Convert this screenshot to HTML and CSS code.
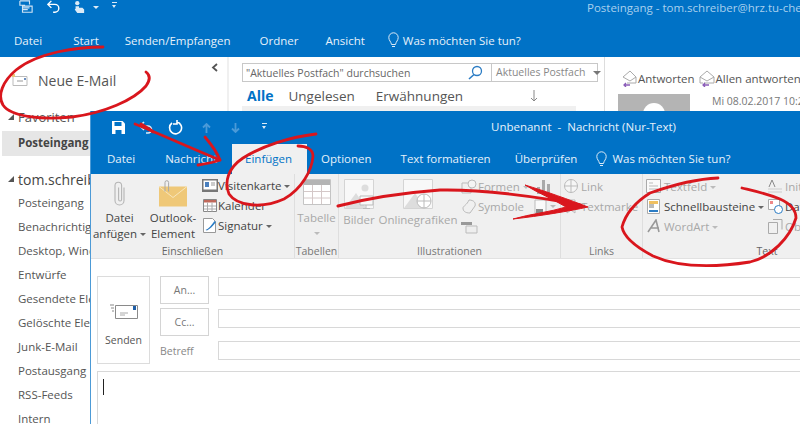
FILE: index.html
```html
<!DOCTYPE html>
<html lang="de">
<head>
<meta charset="utf-8">
<title>Outlook</title>
<link rel="stylesheet" href="styles.css">
</head>
<body>
<div class="win back">
  <header class="bhead">
    <div class="btitle">
      <div class="qat">
        <svg class="ic" width="16" height="14" viewBox="0 0 18 16"><path d="M2 1h11v4M2 1v5h6M5 7h11v7H5zM5 9h8M5 11h6" fill="none" stroke="#cfe4f5" stroke-width="1.3"/></svg>
        <svg class="ic" width="14" height="14" viewBox="0 0 16 16"><path d="M5 1 1 5l4 4M1 5h8a4.500 4.500 0 0 1 0 9H7" fill="none" stroke="#fff" stroke-width="1.6"/></svg>
        <svg class="ic" width="12" height="14" viewBox="0 0 14 16"><circle cx="5" cy="3.500" r="2.500" fill="#dcebf7"/><path d="M3 7h4v2h4l2 2v4H5L2 11l1-1z" fill="#dcebf7"/></svg>
        <span class="caret w"></span>
        <span class="qmenu"></span>
      </div>
      <span class="acct">Posteingang - tom.schreiber@hrz.tu-chemnitz.de</span>
    </div>
    <nav class="btabs">
      <span class="t1">Datei</span><span class="t2">Start</span><span class="t3">Senden/Empfangen</span><span class="t4">Ordner</span><span class="t5">Ansicht</span>
      <svg class="bulb" width="11" height="17" viewBox="0 0 11 17"><path d="M3.500 12.500C3 9.500.8 8.500.8 5.500a4.700 4.700 0 0 1 9.400 0c0 3-2.200 4-2.700 7zM4 14.500h3" fill="none" stroke="#dcebf7"/></svg>
      <span class="ask">Was möchten Sie tun?</span>
    </nav>
  </header>
  <main class="bmain">
    <aside class="side">
      <div class="newmail">
        <svg width="16" height="12" viewBox="0 0 16 12"><path d="M1 2.500h14v9H1z" fill="#fff" stroke="#bbb"/><path d="M5 7h6" stroke="#999"/><path d="M0 0h3v3H0z" fill="#e9c67a"/><path d="M12 4h2v2h-2z" fill="#6d8fc0"/></svg>
        <span>Neue E-Mail</span>
      </div>
      <div class="fav"><span class="tri"></span>Favoriten</div>
      <div class="favitem">Posteingang</div>
      <div class="acc"><span class="tri"></span>tom.schreiber</div>
      <ul class="folders">
        <li>Posteingang</li><li>Benachrichtigungen</li><li>Desktop, Windows</li><li>Entwürfe</li><li>Gesendete Elemente</li><li>Gelöschte Elemente</li><li>Junk-E-Mail</li><li>Postausgang</li><li>RSS-Feeds</li><li>Intern</li>
      </ul>
      <svg class="collapse" width="7" height="9" viewBox="0 0 7 9"><path d="M6 1 2 4.500 6 8" fill="none" stroke="#555" stroke-width="1.800"/></svg>
    </aside>
    <section class="list">
      <div class="search">
        <span class="q">"Aktuelles Postfach" durchsuchen</span>
        <svg class="lens" width="16" height="15" viewBox="0 0 16 15"><circle cx="10" cy="6" r="4.500" fill="none" stroke="#2b7cc4" stroke-width="1.300"/><path d="M7 9.500 2 14" stroke="#2b7cc4" stroke-width="1.600"/></svg>
        <span class="scope">Aktuelles Postfach<i class="caret g"></i></span>
      </div>
      <div class="filters">
        <b>Alle</b><span class="f2">Ungelesen</span><span class="f3">Erwähnungen</span>
        <svg class="down" width="8" height="12" viewBox="0 0 8 12"><path d="M4 0v11M1 8l3 3 3-3" fill="none" stroke="#888"/></svg>
      </div>
      <div class="band"></div>
    </section>
    <section class="read">
      <div class="actions">
        <svg width="17" height="17" viewBox="0 0 17 17"><path d="M2 7 9 1l6 6v6H6" fill="none" stroke="#aaa"/><path d="M2 7l7 4 6-4" fill="none" stroke="#aaa"/><path d="M3 15h6M5 13l-2 2 2 2" fill="none" stroke="#8a5cb8" stroke-width="1.300"/></svg>
        <span>Antworten</span>
        <svg class="a2" width="18" height="17" viewBox="0 0 18 17"><path d="M2 7 9 1l7 6v6H6" fill="none" stroke="#aaa"/><path d="M2 7v6h3M2 7l7 4 7-4" fill="none" stroke="#aaa"/><path d="M5 15h6M7 13l-2 2 2 2" fill="none" stroke="#8a5cb8" stroke-width="1.300"/></svg>
        <span>Allen antworten</span>
      </div>
      <div class="sender">
        <div class="avatar"><span></span></div>
        <time>Mi 08.02.2017 10:29</time>
      </div>
    </section>
  </main>
</div>

<div class="win front">
  <header class="fhead">
    <div class="ftitle">
      <div class="fqat">
        <svg width="15" height="15" viewBox="0 0 15 15"><path d="M1 1h10.500L14 3.500V14H1z" fill="#fff"/><path d="M3.500 2h7v4h-7zM4.500 10h6v4h-6z" fill="#0072c6"/></svg>
        <svg width="15" height="13" viewBox="0 0 15 13"><path d="M5 1 1 5l4 4M1 5h8a3.500 3.500 0 0 1 0 7H7" fill="none" stroke="#dcebf7" stroke-width="1.600"/></svg>
        <svg width="15" height="15" viewBox="0 0 15 15"><path d="M4 3a6 6 0 1 0 5-1M9 0v4H5" fill="none" stroke="#fff" stroke-width="1.600"/></svg>
        <svg class="dim" width="9" height="10" viewBox="0 0 9 10"><path d="M4.500 10V1M1 4.500 4.500 1 8 4.500" fill="none" stroke="#4a9ad8" stroke-width="1.800"/></svg>
        <svg class="dim" width="9" height="10" viewBox="0 0 9 10"><path d="M4.500 0v9M1 5.500 4.500 9 8 5.500" fill="none" stroke="#4a9ad8" stroke-width="1.800"/></svg>
        <span class="qmenu"></span>
      </div>
      <span class="ftext">Unbenannt &nbsp;-&nbsp; Nachricht (Nur-Text)</span>
    </div>
    <nav class="ftabs">
      <span class="ft1">Datei</span><span class="ft2">Nachricht</span><span class="ft3">Einfügen</span><span class="ft4">Optionen</span><span class="ft5">Text formatieren</span><span class="ft6">Überprüfen</span>
      <svg class="bulb2" width="11" height="17" viewBox="0 0 11 17"><path d="M3.500 12.500C3 9.500.8 8.500.8 5.500a4.700 4.700 0 0 1 9.400 0c0 3-2.200 4-2.700 7zM4 14.500h3" fill="none" stroke="#dcebf7"/></svg>
      <span class="ask">Was möchten Sie tun?</span>
    </nav>
  </header>

  <div class="ribbon">
    <section class="grp g1">
      <div class="gbody">
        <div class="big b1">
          <svg width="14" height="28" viewBox="0 0 14 28"><path d="M11 8v13a4.500 4.500 0 0 1-9 0V6a3.300 3.300 0 0 1 6.600 0v14a1.500 1.500 0 0 1-3 0V8" fill="none" stroke="#b5b5b5" stroke-width="1.100"/></svg>
          <span>Datei<br>anfügen <i class="caret"></i></span>
        </div>
        <div class="big b2">
          <svg width="30" height="28" viewBox="0 0 30 28"><path d="M1 7h28v20H1z" fill="#efc878"/><path d="M1 7l14 11L29 7" fill="none" stroke="#f8e6bd"/><path d="M7 12V3a1.800 1.800 0 0 1 3.600 0v9" fill="none" stroke="#a8a8a8"/></svg>
          <span>Outlook-<br>Element</span>
        </div>
        <div class="small s1">
          <div class="srow"><svg width="16" height="13" viewBox="0 0 16 13"><path d="M0 0h16v13H0z" fill="#777"/><path d="M1.500 1.500h13v9h-13z" fill="#fff"/><path d="M3 3h4v5H3z" fill="#4a7fbe"/><path d="M9 4h4M9 6h4" stroke="#999"/></svg><span>Visitenkarte <i class="caret"></i></span></div>
          <div class="srow"><svg width="16" height="13" viewBox="0 0 14 13"><path d="M.500.500h13v12H.500z" fill="#fff" stroke="#888"/><path d="M1 1h12v2.500H1z" fill="#c0685a"/><path d="M4.500 3.500v9M9 3.500v9M1 7h12M1 10h12" stroke="#aaa"/></svg><span>Kalender</span></div>
          <div class="srow"><svg width="16" height="15" viewBox="0 0 15 15"><path d="M1 .500h9l3 3V14.500H1z" fill="#fff" stroke="#999"/><path d="M3 12c3-1 6-5 9-9l1.500 1c-3 4-6 7-9 8.500z" fill="#2b7cc4"/></svg><span>Signatur <i class="caret"></i></span></div>
        </div>
      </div>
      <label>Einschließen</label>
    </section>
    <section class="grp g2 off">
      <div class="gbody col">
        <svg width="28" height="26" viewBox="0 0 28 26"><path d="M.500.500h27v25H.500z" fill="#fff" stroke="#c4c4c4"/><path d="M1 1h26v5H1z" fill="#b4b4b4"/><path d="M9.500 6v19M18.500 6v19M1 12.500h26M1 19h26" stroke="#d4c8c8"/></svg>
        <span class="tb">Tabelle</span>
        <i class="caret"></i>
      </div>
      <label>Tabellen</label>
    </section>
    <section class="grp g3 off">
      <div class="gbody">
        <div class="ill">
          <svg class="pic1" width="30" height="30" viewBox="0 0 30 30"><path d="M.500.500h29v29H.500z" fill="#f8f8f8" stroke="#d4d4d4"/><path d="M1 29 12 14l10 15z" fill="#ddd"/><circle cx="21" cy="9" r="3.500" fill="#ddd"/><path d="M16 17h13v9H16zM22 26v3M19 29.500h7" fill="#f8f8f8" stroke="#bbb"/></svg>
          <span>Bilder</span>
        </div>
        <div class="ill i2">
          <svg class="pic2" width="30" height="30" viewBox="0 0 30 30"><path d="M.500.500h29v29H.500z" fill="#f8f8f8" stroke="#d4d4d4"/><path d="M1 29 12 14l10 15z" fill="#ddd"/><circle cx="21" cy="22" r="7" fill="#fff" stroke="#bbb"/><path d="M14 22h14M21 15v14" stroke="#bbb"/></svg>
          <span>Onlinegrafiken</span>
        </div>
        <div class="small s3">
          <div class="srow"><svg width="17" height="15" viewBox="0 0 17 15"><path d="M1 4h9v10H1z" fill="none" stroke="#bbb"/><circle cx="11" cy="5" r="4" fill="#f4f4f4" stroke="#bbb"/></svg><span>Formen <i class="caret"></i></span><svg class="mini" width="13" height="15" viewBox="0 0 13 15"><path d="M0 8h3v7H0zM5 1h3v14H5zM10 5h3v10h-3z" fill="#aaa"/></svg></div>
          <div class="srow"><svg width="17" height="15" viewBox="0 0 17 15"><path d="M8 1c5 0 7 3 6 6l-5 7c-5 0-7-2-7-5 0-2 4-3 6-8z" fill="none" stroke="#bbb"/></svg><span>Symbole</span><svg class="mini m2" width="13" height="15" viewBox="0 0 13 15"><path d="M1 1h11v13H1z" fill="#fafafa" stroke="#bbb"/><path d="M2 10h7v4H2z" fill="#888"/></svg><i class="caret"></i></div>
          <div class="srow"><svg class="sa" width="17" height="13" viewBox="0 0 17 13"><path d="M0 1h11v3H0z" fill="#999"/><path d="M5 5h11v7H5z" fill="#eee" stroke="#bbb"/></svg></div>
        </div>
      </div>
      <label>Illustrationen</label>
    </section>
    <section class="grp g4 off">
      <div class="gbody">
        <div class="small s4">
          <div class="srow"><svg width="15" height="15" viewBox="0 0 15 15"><circle cx="7" cy="7" r="6.500" fill="#f6f6f6" stroke="#bbb"/><path d="M0 7h14M7 0v14" stroke="#bbb"/></svg><span>Link</span></div>
          <div class="srow"><svg width="15" height="15" viewBox="0 0 15 15"><path d="M3 1h8v13l-4-3-4 3z" fill="#f6f6f6" stroke="#bbb"/></svg><span>Textmarke</span></div>
        </div>
      </div>
      <label>Links</label>
    </section>
    <section class="grp g5">
      <div class="gbody">
        <div class="small s5">
          <div class="srow off"><svg width="15" height="14" viewBox="0 0 15 14"><path d="M.500.500h14v13H.500z" fill="#fafafa" stroke="#aaa"/><path d="M3 4h4M3 7h9M3 10h9" stroke="#bbb"/></svg><span>Textfeld <i class="caret"></i></span></div>
          <div class="srow"><svg width="15" height="15" viewBox="0 0 13 15"><path d="M.500.500h12v14H.500z" fill="#fff" stroke="#aaa"/><path d="M2 2h9v3H2z" fill="#f0c060"/><path d="M2 6h5M2 8h5" stroke="#777"/><path d="M2 11h9v2H2z" fill="#2b7cc4"/></svg><span class="strong">Schnellbausteine <i class="caret"></i></span></div>
          <div class="srow off"><svg width="15" height="15" viewBox="0 0 13 15"><path d="M1 13 9 1l3 12M4 9h8" fill="none" stroke="#999" stroke-width="1.600"/></svg><span>WordArt <i class="caret"></i></span></div>
        </div>
        <div class="small s6">
          <div class="srow off"><svg width="15" height="15" viewBox="0 0 15 15"><path d="M0 13h14M0 10h14" stroke="#ccc"/><path d="M1 8l3-7 3 7" fill="none" stroke="#888"/></svg><span>Initiale</span></div>
          <div class="srow"><svg width="15" height="15" viewBox="0 0 15 15"><path d="M.500.500h11v10H.500z" fill="#fff" stroke="#aaa"/><path d="M2 2h3v3H2z" fill="#e88"/><circle cx="10.500" cy="10.500" r="4" fill="#fff" stroke="#2b7cc4"/></svg><span class="strong">Datum</span></div>
          <div class="srow off"><svg width="15" height="15" viewBox="0 0 15 15"><path d="M.500 3.500h9v11h-9zM5 .500h9v10" fill="none" stroke="#aaa"/></svg><span>Objekt</span></div>
        </div>
      </div>
      <label>Text</label>
    </section>
  </div>

  <div class="compose">
    <button class="send">
      <svg width="28" height="15" viewBox="0 0 28 15"><path d="M5.500 1.500h22v13h-22z" fill="#fff" stroke="#8a8a8a"/><path d="M10 9h8M10 11h5" stroke="#aaa"/><path d="M23 2h3v4h-3z" fill="#1f5fa8"/><path d="M0 1h4M1 4h3M2 7h2" stroke="#888"/></svg>
      <span>Senden</span>
    </button>
    <div class="fields">
      <div class="frow"><button class="addr">An...</button><div class="inp"></div></div>
      <div class="frow"><button class="addr">Cc...</button><div class="inp"></div></div>
      <div class="frow sub"><span class="blabel">Betreff</span><div class="inp"></div></div>
    </div>
  </div>
  <div class="body"><span class="cursor"></span></div>
</div>

<svg class="ink" width="800" height="424" viewBox="0 0 800 424" fill="none">
  <path class="pen" d="M103 47C78 47 38 52 16 70C3 81-3 95 3 105C11 117 42 120 72 117C104 113 134 100 146 86C151 79 150 75 146 72"/>
  <path class="pen" d="M135 124C160 134 195 150 220 160"/>
  <path class="pen" d="M141 124C146 127 150 129 153 132M205 137C210 143 217 152 220 160C212 163 204 164 198 165"/>
  <path class="pen" d="M316 134C290 137 262 146 243 158C228 168 224 182 229 194C237 206 262 209 284 199C302 189 312 170 313 156C313 149 306 146 298 146"/>
  <path class="pen thin" d="M338 206C365 199 400 193 440 190C480 189 540 197 580 205"/>
  <path class="fillink" d="M525 185C545 191 570 200 588 207C570 211 540 216 513 219C530 214 550 212 566 207C553 199 538 193 525 185Z"/>
  <path class="pen" d="M718 178C693 179 667 187 650 193C634 203 625 216 622 227C624 238 636 247 653 256C675 266 705 269 750 262C771 257 790 238 796 218C796 210 791 204 780 199C765 193 750 190 742 188"/>
</svg>
</body>
</html>
```
FILE: styles.css
```css
* { box-sizing: border-box; }
html, body { margin: 0; padding: 0; }
body {
  width: 800px; height: 424px; overflow: hidden; position: relative;
  font-family: "Open Sans", "Noto Sans", sans-serif; font-size: 11.500px; color: #444; background: #fff;
}
svg { flex: none; display: block; }
ul { list-style: none; margin: 0; padding: 0; }
label { display: block; }
i { font-style: normal; }
button { font: inherit; color: inherit; background: #fff; padding: 0; }

.win { position: absolute; overflow: hidden; }
.back { left: 0; top: 0; width: 800px; height: 424px; background: #fff; }
.front { left: 90px; top: 111px; width: 710px; height: 313px; background: #fff; border-left: 1px solid #4c9ad6; display: flex; flex-direction: column; }

.caret { display: inline-block; width: 0; height: 0; border: 3px solid transparent; border-top: 3px solid #666; border-bottom: 0; vertical-align: middle; }
.caret.w { border-top-color: #dcebf7; }
.caret.g { border-top-color: #777; border-width: 4px 4px 0; margin-left: 8px; }
.qmenu { display: inline-block; width: 5px; height: 6px; border-top: 1px solid #dcebf7; position: relative; }
.qmenu::after { content: ""; position: absolute; left: 0; top: 2px; border: 2.500px solid transparent; border-top: 3px solid #dcebf7; border-bottom: 0; }

/* back window */
.bhead { height: 57px; background: #0072c6; color: #dcebf7; }
.btitle { height: 30px; display: flex; align-items: flex-start; }
.qat { display: flex; align-items: center; height: 14px; padding-left: 18px; }
.qat .ic:nth-child(2) { margin-left: 13px; }
.qat .ic:nth-child(3) { margin-left: 12px; }
.qat .caret { margin-left: 8px; }
.qat .qmenu { margin-left: 13px; margin-top: -4px; }
.acct { position: absolute; left: 587px; top: 0; line-height: 16px; color: #a9d0ee; white-space: nowrap; }
.btabs { display: flex; align-items: center; height: 20px; position: relative; color: #e6f1fa; }
.btabs > span { white-space: nowrap; }
.t1 { margin-left: 14px; }
.t2 { margin-left: 31px; }
.t3 { margin-left: 26px; }
.t4 { margin-left: 29px; }
.t5 { margin-left: 27px; }
.bulb { margin-left: 23px; }
.ask { margin-left: 4px; }

.bmain { display: flex; height: 367px; }
.side { flex: none; width: 229px; position: relative; background: #fff; border-right: 2px solid #f0f0f0; padding-left: 2px; overflow: hidden; }
.newmail { display: flex; align-items: center; height: 46px; padding-left: 10px; font-size: 14px; color: #555; gap: 10px; }
.fav, .acc { display: flex; align-items: center; padding-left: 6px; white-space: nowrap; }
.fav { height: 28px; font-size: 13px; color: #555; }
.tri { width: 0; height: 0; border-left: 6px solid transparent; border-bottom: 6px solid #555; margin-right: 4px; }
.favitem { height: 25px; background: #e6e6e6; font-weight: 700; line-height: 24px; padding-left: 16px; }
.acc { height: 24px; margin-top: 11px; font-size: 14px; }
.folders li { height: 24px; line-height: 24px; padding-left: 16px; color: #555; white-space: nowrap; }
.collapse { position: absolute; right: 9px; top: 6px; }

.list { flex: none; width: 376px; border-right: 1px solid #ddd; padding: 6px 8px 0 13px; }
.search { display: flex; align-items: center; height: 19px; border: 1px solid #c8c8c8; width: 356px; }
.q { color: #666; font-size: 10.500px; padding-left: 3px; width: 225px; white-space: nowrap; flex: none; }
.lens { margin-left: -1px; }
.scope { margin-left: 8px; padding-left: 4px; height: 100%; line-height: 17px; border-left: 1px solid #c8c8c8; color: #888; font-size: 10.500px; white-space: nowrap; flex: 1; }
.filters { display: flex; align-items: center; height: 27px; font-size: 13.500px; padding-left: 5px; color: #555; white-space: nowrap; }
.filters b { color: #0072c6; font-size: 14px; }
.f2 { margin-left: 15px; }
.f3 { margin-left: 21px; }
.down { margin-left: 67px; }
.band { height: 6px; background: #f0f0f0; width: 334px; margin-top: -3px; }

.read { flex: 1; min-width: 0; overflow: hidden; padding: 12px 0 0 16px; }
.actions { display: flex; align-items: center; height: 18px; font-size: 11.500px; color: #555; white-space: nowrap; }
.a2 { margin-left: 3px; }
.sender { display: flex; margin: 7px 0 0 -3px; }
.avatar { flex: none; width: 72px; height: 40px; background: #b4b4b4; overflow: hidden; }
.avatar span { display: block; width: 22px; height: 22px; border-radius: 50%; background: #fff; margin: 9px auto 0; }
.sender time { margin-left: 22px; font-size: 10.500px; color: #777; white-space: nowrap; }

/* front window */
.fhead { height: 63px; background: #0072c6; color: #e6f1fa; flex: none; }
.ftitle { height: 33px; display: flex; align-items: center; position: relative; }
.fqat { display: flex; align-items: center; padding-left: 20px; }
.fqat svg:nth-child(2) { margin-left: 13px; }
.fqat svg:nth-child(3) { margin-left: 14px; }
.fqat svg:nth-child(4) { margin-left: 19px; }
.fqat svg:nth-child(5) { margin-left: 20px; }
.fqat .qmenu { margin-left: 22px; margin-top: -3px; }
.ftext { position: absolute; left: 400px; top: 8px; white-space: nowrap; }
.ftabs { display: flex; align-items: stretch; height: 30px; white-space: nowrap; }
.ftabs span { line-height: 30px; }
.ft1 { margin-left: 16px; }
.ft2 { margin-left: 30px; }
.ft3 { margin-left: 15px; width: 75px; padding-left: 13px; background: #f0f0f0; color: #0072c6; }
.ft4 { margin-left: 14px; }
.ft5 { margin-left: 29px; }
.ft6 { margin-left: 24px; }
.bulb2 { margin: 7px 0 0 19px; }
.ftabs .ask { margin-left: 5px; }

.ribbon { display: flex; height: 85px; background: #f0f0f0; border-bottom: 1px solid #e2e2e2; flex: none; }
.grp { display: flex; flex-direction: column; border-right: 1px solid #dedede; height: 84px; flex: none; }
.grp label { height: 14px; line-height: 14px; font-size: 10.500px; text-align: center; color: #666; }
.gbody { display: flex; flex: 1; min-height: 0; }
.g1 { width: 204px; }
.g2 { width: 44px; }
.g3 { width: 222px; }
.g4 { width: 82px; }
.g5 { width: 248px; border-right: 0; }
.off { color: #a8a8a8; }
.off label { color: #777; }

.big { display: flex; flex-direction: column; align-items: center; text-align: center; line-height: 16px; padding-top: 5px; flex: none; }
.big span { margin-top: 2px; white-space: nowrap; }
.big svg { height: 29px; }
.b1 { width: 55px; margin-left: 1px; }
.b2 { width: 52px; }
.small { display: flex; flex-direction: column; padding-top: 2px; flex: none; }
.srow { display: flex; align-items: center; height: 20px; gap: 2px; white-space: nowrap; }
.s1 { margin-left: 3px; padding-top: 1px; }
.s1 .srow { gap: 0; }
.strong { color: #444; }

.col { flex-direction: column; align-items: center; padding-top: 5px; }
.col .tb { margin-top: 5px; line-height: 16px; }
.col .caret { margin-top: 6px; border-top-color: #bbb; }
.ill { display: flex; flex-direction: column; align-items: center; padding-top: 5px; line-height: 16px; width: 40px; flex: none; }
.ill span { margin-top: 3px; }
.i2 { width: 78px; }
.s3 { margin-left: 4px; }
.s3 .srow { gap: 0; }
.mini { margin-left: 8px; }
.m2 { margin-left: 10px; margin-right: 3px; }
.sa { margin-top: 2px; }
.off .caret { border-top-color: #bbb; }
.s4 { margin-left: 3px; }
.s5 { margin-left: 3px; width: 122px; }
.s5 .srow { gap: 3px; }

.compose { display: flex; padding: 17px 0 0 6px; flex: none; height: 112px; }
.send { width: 53px; height: 88px; border: 1px solid #dcdcdc; display: flex; flex-direction: column; align-items: center; padding-top: 27px; flex: none; color: #555; font-size: 10.500px; gap: 14px; }
.fields { flex: 1; padding-left: 10px; display: flex; flex-direction: column; }
.frow { display: flex; height: 32px; flex: none; align-items: flex-start; }
.addr { width: 49px; height: 28px; border: 1px solid #d4d4d4; color: #777; font-size: 10.500px; flex: none; }
.inp { flex: 1; height: 19px; margin: 1px 0 0 9px; border: 1px solid #d8d8d8; border-right: 0; }
.blabel { width: 49px; padding-top: 4px; font-size: 10.500px; color: #888; flex: none; }
.body { flex: 1; margin-left: 6px; border: 1px solid #d8d8d8; border-right: 0; border-bottom: 0; padding: 7px 0 0 5px; }
.cursor { display: block; width: 1px; height: 16px; background: #222; }

/* hand-drawn annotations lie over the whole screenshot */
.ink { position: absolute; left: 0; top: 0; pointer-events: none; }
.pen { stroke: #d9161d; stroke-width: 2.800; stroke-linecap: round; stroke-linejoin: round; }
.thin { stroke-width: 3; }
.fillink { fill: #d9161d; stroke: #d9161d; stroke-width: 1; }
```
